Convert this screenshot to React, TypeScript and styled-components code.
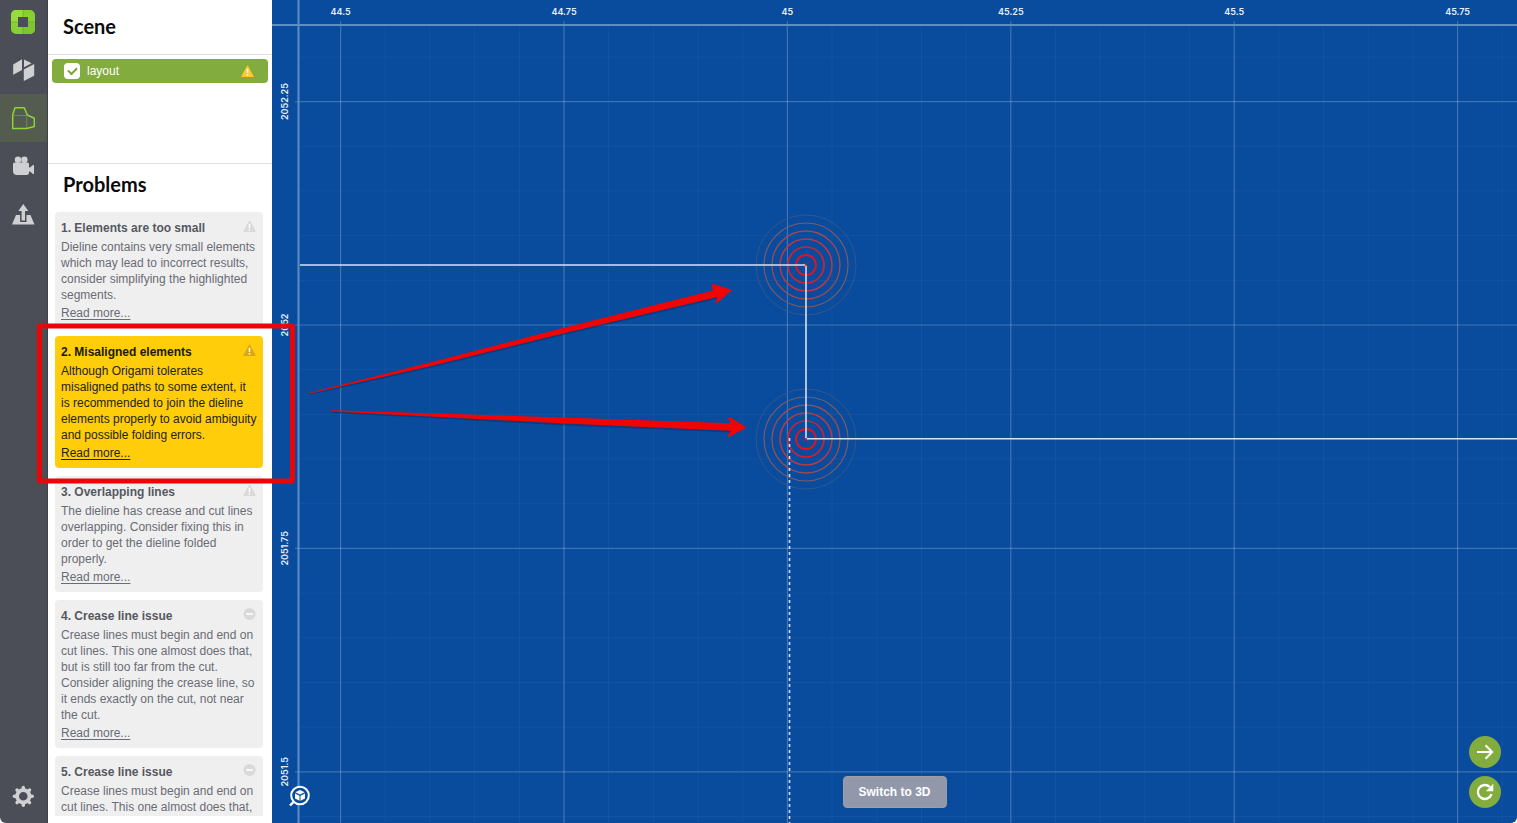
import React from "react";
import styled, { createGlobalStyle } from "styled-components";

const Global = createGlobalStyle`
  * { box-sizing: border-box; }
  html, body { margin: 0; background: #fff; }
  body { font-family: "Liberation Sans", Arial, sans-serif; font-size: 12px; }
  button { font: inherit; border: 0; padding: 0; cursor: pointer; }
`;

const Shell = styled.div`
  position: relative;
  display: flex;
  height: 100vh;
  border-radius: 0 0 6px 6px;
  overflow: hidden;
`;

const Rail = styled.nav`
  flex: none;
  width: 48px;
  display: flex;
  flex-direction: column;
  background: #4b4d57;
  border-right: 1px solid #3f4149;
  padding-bottom: 3px;
`;

const Logo = styled.div`
  height: 46px;
  padding: 0 1px 2px 0;
  display: grid;
  place-items: center;
`;

const RailButton = styled.button<{ $active?: boolean; $last?: boolean }>`
  height: 48px;
  padding-right: 1px;
  display: grid;
  place-items: center;
  color: #cfd0d2;
  background: ${(p) => (p.$active ? "#535c4e" : "transparent")};
  margin-top: ${(p) => (p.$last ? "auto" : "0")};
`;

const Side = styled.aside`
  flex: none;
  width: 224px;
  display: flex;
  flex-direction: column;
  background: #fff;
  padding-bottom: 7px;
`;

const Heading = styled.h2`
  margin: 0;
  padding-left: 15px;
  font: 700 20px/24px Lato, sans-serif;
  color: #0b0b0d;
`;

const SceneHead = styled.header`
  height: 55px;
  padding-top: 14px;
  border-bottom: 1px solid #dfe0e3;
`;

const SceneList = styled.div`
  height: 109px;
  padding: 4px;
  border-bottom: 1px solid #dfe0e3;
`;

const LayerRow = styled.label`
  display: flex;
  align-items: center;
  height: 24px;
  padding: 0 14px 0 12px;
  border-radius: 4px;
  background: #83ac3f;
  color: #fff;
  span { flex: 1; margin-left: 7px; }
`;

const Check = styled.input`
  appearance: none;
  width: 16px;
  height: 16px;
  margin: 0;
  border-radius: 4px;
  background: #fff;
  display: grid;
  place-items: center;
  &:checked::after {
    content: "";
    box-sizing: border-box;
    width: 9px;
    height: 6px;
    margin-bottom: 3px;
    border: solid #77a433;
    border-width: 0 0 2px 2px;
    transform: rotate(-45deg);
  }
`;

const ProblemsHead = styled.header`
  height: 48px;
  padding-top: 8px;
`;

const ProblemList = styled.div`
  flex: 1;
  min-height: 0;
  overflow-y: auto;
  scrollbar-width: none;
  display: flex;
  flex-direction: column;
  gap: 8px;
  padding: 0 9px 0 7px;
`;

const Card = styled.article<{ $active?: boolean }>`
  flex: none;
  padding: 8px 6px 7px;
  border-radius: 4px;
  background: ${(p) => (p.$active ? "#ffcd0a" : "#efefef")};
  color: ${(p) => (p.$active ? "#26210f" : "#6a6c75")};
  line-height: 16px;
  h3 {
    flex: 1;
    margin: 0;
    font-size: 12px;
    color: ${(p) => (p.$active ? "#1c1803" : "#555861")};
  }
  p { margin: 3px 0 2px; }
  a { display: block; width: max-content; color: inherit; text-underline-offset: 2px; }
  svg { color: ${(p) => (p.$active ? "#dba613" : "#d9d9d9")}; margin-right: 1px; }
`;

const CardHead = styled.div`
  display: flex;
  align-items: flex-start;
`;

const Canvas = styled.main`
  position: relative;
  flex: 1;
  min-width: 0;
  background: #094c9e;
`;

const Blueprint = styled.svg`
  position: absolute;
  inset: 0;
  width: 100%;
  height: 100%;
  text { font: 600 9px Inter, sans-serif; fill: #e6eefb; text-anchor: middle; }
`;

const SwitchBar = styled.div`
  position: absolute;
  left: 0;
  right: 0;
  bottom: 15px;
  display: flex;
  justify-content: center;
`;

const SwitchButton = styled.button`
  width: 104px;
  height: 32px;
  border-radius: 4px;
  background: #9298aa;
  border: 1px solid #a09f9f;
  color: #fff;
  font-weight: 700;
`;

const RoundStack = styled.div`
  position: absolute;
  right: 16px;
  bottom: 15px;
  display: grid;
  gap: 8px;
`;

const RoundButton = styled.button`
  width: 32px;
  height: 32px;
  border-radius: 50%;
  background: #83ac3f;
  display: grid;
  place-items: center;
`;

const FitButton = styled.button`
  position: absolute;
  left: 16px;
  bottom: 15px;
  width: 24px;
  height: 24px;
  background: none;
`;

const Annotations = styled.svg`
  position: absolute;
  left: 0;
  top: 0;
  width: 100%;
  height: 100%;
  pointer-events: none;
`;

const WarnIcon = ({ fill = "currentColor" }: { fill?: string }) => (
  <svg width="13" height="12" viewBox="0 0 13 12" aria-hidden="true">
    <path d="M6.5.8 12.3 11.5H.7Z" fill={fill} stroke={fill} strokeLinejoin="round" />
    <path d="M6.5 3.8v4.2M6.5 9v1.500" stroke="#fff" strokeWidth="1.6" />
  </svg>
);

const MinusIcon = () => (
  <svg width="13" height="12" viewBox="0 0 13 12" aria-hidden="true">
    <circle cx="6.5" cy="6" r="6" fill="currentColor" />
    <path d="M3 6h7" stroke="#fff" strokeWidth="1.6" />
  </svg>
);

type Problem = { title: string; text: string; icon: "warn" | "minus"; active?: boolean };

const crease =
  "Crease lines must begin and end on cut lines. This one almost does that, but is still too far from the cut. Consider aligning the crease line, so it ends exactly on the cut, not near the cut.";

const problems: Problem[] = [
  {
    title: "1. Elements are too small",
    text: "Dieline contains very small elements which may lead to incorrect results, consider simplifying the highlighted segments.",
    icon: "warn",
  },
  {
    title: "2. Misaligned elements",
    text: "Although Origami tolerates misaligned paths to some extent, it is recommended to join the dieline elements properly to avoid ambiguity and possible folding errors.",
    icon: "warn",
    active: true,
  },
  {
    title: "3. Overlapping lines",
    text: "The dieline has crease and cut lines overlapping. Consider fixing this in order to get the dieline folded properly.",
    icon: "warn",
  },
  { title: "4. Crease line issue", text: crease, icon: "minus" },
  { title: "5. Crease line issue", text: crease, icon: "minus" },
];

const STEP = 223.4;
const MINOR = STEP / 5;
const X0 = 68.6;
const Y0 = 101.6;
const xLabels = ["44.5", "44.75", "45", "45.25", "45.5", "45.75"];
const yLabels = ["2052.25", "2052", "2051.75", "2051.5"];
const range = (n: number) => Array.from({ length: n }, (_, i) => i);
const rings = [
  { r: 10, color: "#e5121f", width: 1.8 },
  { r: 18, color: "#d3202f", width: 1.7 },
  { r: 26, color: "#bd3742", width: 1.5 },
  { r: 34, color: "#9d4b4f", width: 1.3 },
  { r: 42, color: "#7f5a64", width: 1.2 },
  { r: 50, color: "#35568a", width: 1 },
];

const Target = ({ x, y }: { x: number; y: number }) => (
  <g fill="none">
    {rings.map(({ r, color, width }) => (
      <circle key={r} cx={x} cy={y} r={r} stroke={color} strokeWidth={width} />
    ))}
  </g>
);

const Cross = ({ x, y }: { x: number; y: number }) => (
  <path d={`M${x - 3} ${y - 3}l6 6m0-6l-6 6`} stroke="#d8142c" strokeOpacity=".8" />
);

const Drawing = () => (
  <Blueprint role="img" aria-label="Dieline blueprint">
    <g stroke="#fff" strokeOpacity=".04">
      {range(60).map((i) => (
        <line key={i} x1={X0 + i * MINOR} x2={X0 + i * MINOR} y1="26" y2="100%" />
      ))}
      {range(40).map((i) => (
        <line key={i} y1={Y0 + (i - 1) * MINOR} y2={Y0 + (i - 1) * MINOR} x1="28" x2="100%" />
      ))}
    </g>
    <g stroke="#fff" strokeOpacity=".2" strokeWidth="1.2">
      {range(12).map((i) => (
        <line key={i} x1={X0 + i * STEP} x2={X0 + i * STEP} y1="21" y2="100%" />
      ))}
      {range(8).map((i) => (
        <line key={i} y1={Y0 + i * STEP} y2={Y0 + i * STEP} x1="23" x2="100%" />
      ))}
    </g>
    <g stroke="#5d8ec6" strokeWidth="2">
      <line x1="0" x2="100%" y1="25" y2="25" />
      <line x1="26.5" x2="26.5" y1="0" y2="100%" />
    </g>
    {xLabels.map((t, i) => (
      <text key={t} x={X0 + i * STEP} y="15">{t}</text>
    ))}
    {yLabels.map((t, i) => (
      <text key={t} transform={`translate(16 ${Y0 + i * STEP}) rotate(-90)`}>{t}</text>
    ))}
    <Target x={534} y={265} />
    <Target x={534} y={439} />
    <g stroke="#d9e0ef" strokeWidth="1.6">
      <line x1="28" x2="534" y1="265" y2="265" />
      <line x1="534" x2="534" y1="265" y2="439" />
      <line x1="534" x2="100%" y1="438.7" y2="438.7" />
      <line x1="517.5" x2="517.5" y1="438" y2="100%" strokeDasharray="3 3" />
    </g>
    <Cross x={534} y={265} />
    <Cross x={534} y={439} />
  </Blueprint>
);

export default function App() {
  return (
    <>
      <Global />
      <Shell>
        <Rail>
          <Logo>
            <svg width="24" height="24" viewBox="0 0 24 24" role="img" aria-label="Origami">
              <path
                fillRule="evenodd"
                fill="#87cf32"
                d="M5 0h14a5 5 0 0 1 5 5v14a5 5 0 0 1-5 5H5a5 5 0 0 1-5-5V5a5 5 0 0 1 5-5Zm2 7v10h10V7Z"
              />
              <path d="M5 0h7v7H7v5H0V5a5 5 0 0 1 5-5Z" fill="#97dc3e" />
              <path d="M12 17v7h7a5 5 0 0 0 5-5v-7h-7v5Z" fill="#7fc62c" />
              <path d="M12 0v7M24 12h-7M12 24v-7M0 12h7" stroke="#64ab22" strokeWidth=".7" />
            </svg>
          </Logo>
          <RailButton aria-label="Model">
            <svg width="24" height="24" viewBox="0 0 24 24" fill="currentColor">
              <path d="M2.200 6.400 11 1.300V12L2.200 16.700ZM13 1.500l7.600 3.700L13 9.200ZM12.800 11.500 23.200 6v11.700L12.800 23Z" />
            </svg>
          </RailButton>
          <RailButton $active aria-label="Dieline">
            <svg width="24" height="24" viewBox="0 0 24 24" fill="none" stroke="#8fd436">
              <path
                d="M1.700 22.500V8.700L4 1.700h9.300l3 7.300 7 3.300v8.200l-7.600 2Z"
                strokeWidth="1.500"
                strokeLinejoin="round"
              />
              <path d="M1.700 9.500h14v13" strokeOpacity=".4" />
            </svg>
          </RailButton>
          <RailButton aria-label="Camera">
            <svg width="24" height="24" viewBox="0 0 24 24" fill="currentColor">
              <circle cx="7" cy="5.700" r="3.200" />
              <circle cx="13.400" cy="5.700" r="3.200" />
              <path d="M3.500 8.500h13a1.500 1.500 0 0 1 1.500 1.500v8.500a2.500 2.500 0 0 1-2.500 2.500H6a4 4 0 0 1-4-4v-7a1.500 1.500 0 0 1 1.500-1.500ZM17.500 13.500h1.500L22 11h1v9h-1L19 17.500h-1.500Z" />
            </svg>
          </RailButton>
          <RailButton aria-label="Export">
            <svg width="24" height="24" viewBox="0 0 24 24" fill="currentColor">
              <path d="M5 13h14.500L23.500 22.500H1Z" />
              <path d="M12.300 3l4.200 6.200h-2.700v9h-3v-9H8.100Z" stroke="#4b4d57" strokeWidth="3.400" />
              <path d="M12.300 2l5 7h-3.300v9.500h-3.400V9H7.300Z" />
            </svg>
          </RailButton>
          <RailButton $last aria-label="Settings">
            <svg width="24" height="24" viewBox="0 0 24 24" fill="none" stroke="currentColor">
              <circle cx="12.300" cy="12.300" r="6.200" strokeWidth="3.800" />
              {range(8).map((i) => (
                <path
                  key={i}
                  d="M12.300 3.400v2.500"
                  strokeWidth="3.400"
                  strokeLinecap="round"
                  transform={`rotate(${i * 45} 12.3 12.3)`}
                />
              ))}
            </svg>
          </RailButton>
        </Rail>
        <Side>
          <SceneHead>
            <Heading>Scene</Heading>
          </SceneHead>
          <SceneList>
            <LayerRow>
              <Check type="checkbox" defaultChecked />
              <span>layout</span>
              <WarnIcon fill="#ffcb1f" />
            </LayerRow>
          </SceneList>
          <ProblemsHead>
            <Heading>Problems</Heading>
          </ProblemsHead>
          <ProblemList>
            {problems.map((p) => (
              <Card key={p.title} $active={p.active}>
                <CardHead>
                  <h3>{p.title}</h3>
                  {p.icon === "warn" ? <WarnIcon /> : <MinusIcon />}
                </CardHead>
                <p>{p.text}</p>
                <a href="#more">Read more...</a>
              </Card>
            ))}
          </ProblemList>
        </Side>
        <Canvas>
          <Drawing />
          <FitButton aria-label="Fit to view">
            <svg width="24" height="24" viewBox="0 0 24 24" fill="none" stroke="#fff">
              <circle cx="12" cy="11.500" r="8.800" strokeWidth="2" fill="#094c9e" />
              <path d="M6 17.500 2 21.500" strokeWidth="2.400" />
              <path
                d="M12 6l4.700 2.200L12 10.500 7.300 8.200ZM7 9.500l4.500 2.200v5L7 14.500ZM17 9.500l-4.500 2.200v5l4.500-2.200Z"
                fill="#fff"
                stroke="none"
              />
            </svg>
          </FitButton>
          <SwitchBar>
            <SwitchButton>Switch to 3D</SwitchButton>
          </SwitchBar>
          <RoundStack>
            <RoundButton aria-label="Next">
              <svg width="20" height="20" viewBox="0 0 20 20" fill="none" stroke="#fff" strokeWidth="2">
                <path d="M2 10h15M10.500 3.300 17.200 10l-6.700 6.700" />
              </svg>
            </RoundButton>
            <RoundButton aria-label="Refresh">
              <svg width="20" height="20" viewBox="0 0 20 20" fill="none" stroke="#fff" strokeWidth="2.4">
                <path d="M16.500 12.200A7 7 0 1 1 14.800 5" />
                <path d="M18.300 1.800v7.400h-7.400Z" fill="#fff" stroke="none" />
              </svg>
            </RoundButton>
          </RoundStack>
        </Canvas>
        <Annotations aria-hidden="true">
          <g fill="#0b2c60" opacity=".5" transform="translate(0 1)">
            <path d="M307 394 430 362.500 564 327.700 715 290 717 298 564 334 430 367 309 394Z" />
            <path d="M331 410 430 413.500 564 417.500 731 423 732 431.500 564 424.500 430 417 331 412Z" />
          </g>
          <g fill="#f00505">
            <path d="M307 393.500 430 362.500 564 327.700 713 290.500 711.500 284.500 713.500 284 732 290 717 303 715.500 302.500 717.500 297 564 333.300 430 366.300 309 393.800Z" />
            <path d="M331 410.200 430 413.300 564 417.500 731 423.300 728 418.500 730 417.300 746.500 427.500 729 437 727.500 435.500 731 430.700 564 423.500 430 416.500 331 411.500Z" />
          </g>
          <rect x="39.5" y="326" width="253" height="155" rx="1" fill="none" stroke="#ea0606" strokeWidth="5" />
        </Annotations>
      </Shell>
    </>
  );
}
